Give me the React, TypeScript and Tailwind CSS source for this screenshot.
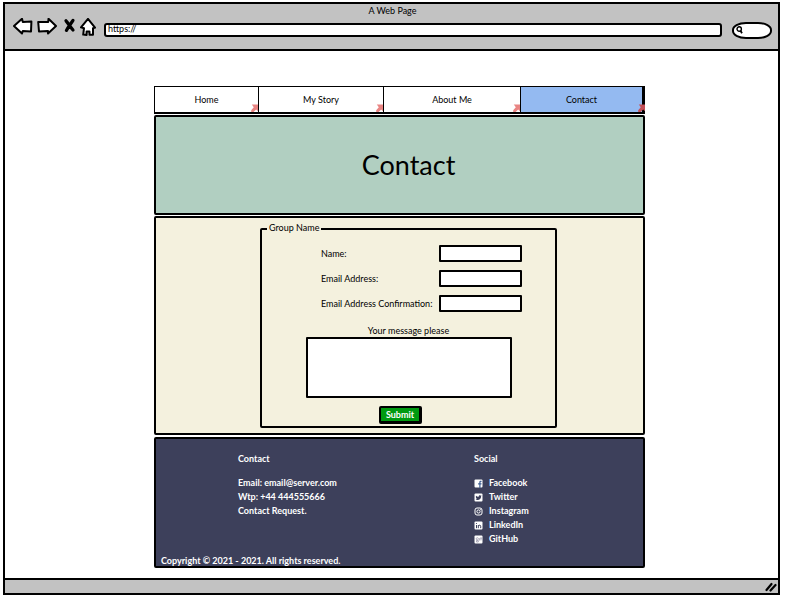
import type { ReactNode } from "react";

const NAV = [
  { label: "Home", active: false },
  { label: "My Story", active: false },
  { label: "About Me", active: false },
  { label: "Contact", active: true },
];

function ChromeButton({ label, width, children }: { label: string; width: number; children: ReactNode }) {
  return (
    <button type="button" aria-label={label} className="block shrink-0">
      <svg width={width} height="24" viewBox={`0 0 ${width} 24`} strokeLinejoin="round" strokeLinecap="round">
        {children}
      </svg>
    </button>
  );
}

function LinkMark({ active }: { active: boolean }) {
  return (
    <svg
      className={active ? "absolute -right-[3px] bottom-0" : "absolute right-0 bottom-0"}
      width="7"
      height="8"
      viewBox="0 0 7 8"
      aria-hidden="true"
    >
      <path d="M0.8 0.6H7V7.2L5.2 5.4L2.6 8H0.2V6.2L2.8 3.2Z" fill={active ? "#c44f57" : "#e98583"} />
    </svg>
  );
}

function Field({ id, label, type }: { id: string; label: string; type: string }) {
  return (
    <>
      <label htmlFor={id} className="whitespace-nowrap">{label}</label>
      <input id={id} type={type} className="h-[17px] w-full rounded-[1px] border-2 border-black bg-white px-1 outline-none" />
    </>
  );
}

const tile = <rect x="0.5" y="0.5" width="8" height="8" rx="1" fill="#fff" />;

const SOCIAL: { name: string; icon: ReactNode }[] = [
  {
    name: "Facebook",
    icon: <>{tile}<path d="M5.3 9V5.6H4.1V4.3H5.3V3.2C5.3 2.1 6 1.6 7.5 1.8V3H6.8C6.5 3 6.5 3.2 6.5 3.5V4.3H7.6L7.4 5.6H6.5V9Z" fill="#3f5f92" /></>,
  },
  {
    name: "Twitter",
    icon: <>{tile}<path d="M2 2.8C2.8 3.6 3.6 3.9 4.5 3.9C4.5 2.3 6 1.9 6.8 2.7L7.6 2.4L7.1 3.3C7.2 6.9 3.7 7.7 1.7 6.4L3 6C2 5.5 1.7 4.3 2 2.8Z" fill="#3d405b" /></>,
  },
  {
    name: "Instagram",
    icon: (
      <>
        <rect x="1" y="1" width="7" height="7" rx="2" fill="none" stroke="#fff" />
        <circle cx="4.5" cy="4.5" r="1.6" fill="none" stroke="#fff" />
        <circle cx="6.6" cy="2.4" r="0.5" fill="#fff" />
      </>
    ),
  },
  {
    name: "LinkedIn",
    icon: <>{tile}<path d="M2.5 4V7.2M4.3 7.2V4M4.3 5C4.8 3.9 6.7 3.9 6.7 5.2V7.2" fill="none" stroke="#3d405b" /><circle cx="2.5" cy="2.5" r="0.6" fill="#3d405b" /></>,
  },
  {
    name: "GitHub",
    icon: <>{tile}<path d="M2.2 3.8A1.1 1.1 0 1 0 4.4 3.8A1.1 1.1 0 1 0 2.2 3.8M2.5 5.5H4.3V7H2.5ZM5.6 3.2V5.5M7 2.4V5.4M6.4 3.2H7.8" fill="none" stroke="#9a98ac" strokeWidth="0.8" /></>,
  },
];

export default function App() {
  return (
    <div className="flex min-h-screen flex-col bg-white pt-[2px] pr-[6px] pb-[5px] pl-[3px] font-['Lato',sans-serif] text-[9px] leading-[14px] text-black">
      <div className="flex grow flex-col border-2 border-black">
        <header className="h-[47px] border-b-2 border-black bg-[#c2c2c2] pr-[6px] pl-2">
          <h2 className="text-center">A Web Page</h2>
          <div className="flex items-center">
            <ChromeButton label="Back" width={20}>
              <path d="M9 .8L1 8L9 15.5L9.8 13L18 13.4L18.4 3.6L9.8 4Z" fill="#fff" stroke="#000" strokeWidth="2" />
            </ChromeButton>
            <div className="ml-1">
              <ChromeButton label="Forward" width={20}>
                <path d="M11.5 .8L19 8L11 15.5V13L2 13.4L1.2 4H11.2Z" fill="#fff" stroke="#000" strokeWidth="2" />
              </ChromeButton>
            </div>
            <div className="ml-[6px]">
              <ChromeButton label="Stop" width={13}>
                <path d="M3 2.8C5 5 7 8.5 10 12M10 2.4C8 5.5 5.5 8.5 3.4 12.4" fill="none" stroke="#000" strokeWidth="3.2" />
              </ChromeButton>
            </div>
            <div className="ml-1">
              <ChromeButton label="Home" width={16}>
                <path d="M8 .9L1 9.4L4 10.2L3.2 16.6L6.6 17V13.4H9.5V16.8H13V10.2L15 9.6Z" fill="#fff" stroke="#000" strokeWidth="2" />
              </ChromeButton>
            </div>
            <input
              aria-label="Web address"
              defaultValue="https://"
              className="ml-2 h-[14px] min-w-0 grow rounded-[3px] border-2 border-black bg-white px-[2px] pb-[3px] leading-[10px] outline-none"
            />
            <label className="ml-[10px] flex h-[17px] w-10 shrink-0 items-center rounded-[14px/8px] border-2 border-black bg-white pl-[2px]">
              <svg width="7" height="8" viewBox="0 0 7 8" className="shrink-0" aria-hidden="true">
                <circle cx="3.2" cy="3" r="2.2" fill="none" stroke="#000" strokeWidth="1.4" />
                <path d="M4.5 4.8L6 7.3" stroke="#000" strokeWidth="1.8" />
              </svg>
              <input aria-label="Search" type="text" className="w-full min-w-0 bg-transparent outline-none" />
            </label>
          </div>
        </header>

        <div className="grid grow grid-cols-[149fr_491fr_133fr] items-start pt-[35px] pb-[10px]">
          <div className="col-start-2">
            <nav className="grid grid-cols-[104fr_125fr_137fr_124fr] border-t border-b-2 border-l border-black">
              {NAV.map((item) => (
                <a
                  key={item.label}
                  href="#"
                  aria-current={item.active ? "page" : undefined}
                  className={
                    item.active
                      ? "relative flex h-[25px] items-center justify-center border-r-[3px] border-black bg-[#94baf1]"
                      : "relative flex h-[25px] items-center justify-center border-r border-black bg-white"
                  }
                >
                  {item.label}
                  <LinkMark active={item.active} />
                </a>
              ))}
            </nav>

            <section className="mt-px flex h-[100px] items-center justify-center rounded-[2px] border-2 border-black bg-[#b1cfc1] pl-[18px]">
              <h1 className="text-[27px] leading-8">Contact</h1>
            </section>

            <main className="mt-px grid grid-cols-[104fr_297fr_86fr] rounded-[2px] border-2 border-black bg-[#f4f1de] pt-1 pb-[5px]">
              <form className="col-start-2" onSubmit={(e) => e.preventDefault()}>
                <fieldset className="rounded-[2px] border-2 border-black">
                  <legend className="ml-[5px] px-[2px] pb-[2px] leading-3">Group Name</legend>
                  <div className="flex flex-col items-center pt-[9px] pb-[2px]">
                    <div className="ml-[26px] grid w-[201px] grid-cols-[1fr_83px] items-center gap-y-2">
                      <Field id="name" label="Name:" type="text" />
                      <Field id="email" label="Email Address:" type="email" />
                      <Field id="confirm" label="Email Address Confirmation:" type="email" />
                    </div>
                    <label htmlFor="message" className="mt-[13px] leading-3">Your message please</label>
                    <textarea id="message" className="block h-[61px] w-[206px] resize-none rounded-[1px] border-2 border-black bg-white p-1 outline-none" />
                    <button type="submit" className="mt-2 mr-4 h-[18px] w-[43px] rounded-[2px] border-t-2 border-r-[3px] border-b-[3px] border-l-2 border-black bg-[#009a10] text-center leading-[13px] font-bold text-white">
                      Submit
                    </button>
                  </div>
                </fieldset>
              </form>
            </main>

            <footer className="mt-[2px] rounded-[2px] border-2 border-black bg-[#3d405b] pt-[13px] font-bold text-white">
              <div className="grid grid-cols-[82fr_236fr_169fr]">
                <section className="col-start-2">
                  <h2>Contact</h2>
                  <ul className="mt-[10px]">
                    <li>Email: email@server.com</li>
                    <li>Wtp: +44 444555666</li>
                    <li>Contact Request.</li>
                  </ul>
                </section>
                <section>
                  <h2>Social</h2>
                  <ul className="mt-[10px]">
                    {SOCIAL.map((s) => (
                      <li key={s.name}>
                        <a href="#" className="flex items-center gap-[6px]">
                          <svg width="9" height="9" viewBox="0 0 9 9" aria-hidden="true">{s.icon}</svg>
                          {s.name}
                        </a>
                      </li>
                    ))}
                  </ul>
                </section>
              </div>
              <p className="mt-[10px] pl-[5px] leading-[10px]">Copyright © 2021 - 2021. All rights reserved.</p>
            </footer>
          </div>
        </div>

        <div className="flex h-[15px] items-center justify-end border-t-2 border-black bg-[#c2c2c2] pr-px">
          <svg width="12" height="10" viewBox="0 0 12 10" aria-hidden="true">
            <path d="M1.5 8L6.5 2M5.5 8.5L10.5 3" stroke="#000" strokeWidth="2.2" strokeLinecap="round" />
          </svg>
        </div>
      </div>
    </div>
  );
}
